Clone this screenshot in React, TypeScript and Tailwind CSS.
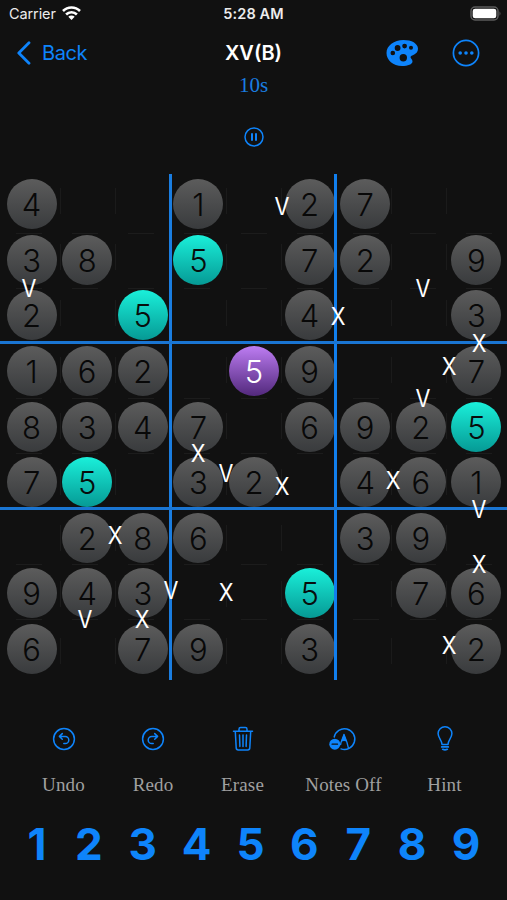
import type { ReactNode } from 'react';

const BLUE = '#0e84fb';

const ROWS = [
  '4..1.27..',
  '38.5.72.9',
  '2.5..4..3',
  '162.59..7',
  '8347.6925',
  '75.32.461',
  '.286..39.',
  '943..5.76',
  '6.79.3..2',
];

// Relation signs, by the centre of the sign on the board
const SIGNS: [string, number, number][] = [
  ['V', 281.5, 206.5], ['V', 29, 288.5], ['V', 422.5, 288.5], ['X', 337.5, 317],
  ['X', 479, 343.5], ['X', 448.5, 367], ['V', 422.5, 399], ['X', 197.5, 454],
  ['V', 226, 473.5], ['X', 281.5, 486.5], ['X', 393, 481], ['V', 479, 509.5],
  ['X', 115, 536], ['X', 479, 564.5], ['V', 170.5, 590.5], ['X', 226, 593],
  ['V', 85, 619.5], ['X', 141.5, 619.5], ['X', 448.5, 646],
];

const SEG_X = [59.5, 115, 226, 281, 391, 446];
const SEG_Y = [232.5, 287.5, 397.5, 453, 563.5, 619];
const NINE = [0, 1, 2, 3, 4, 5, 6, 7, 8];

const BOARD_TOP = 173;

function Cell({ value, selected }: { value: string; selected: boolean }) {
  if (value === '.') return <div />;
  const tone = selected
    ? 'bg-linear-to-b from-[#be7df3] to-[#53297d] text-white'
    : value === '5'
      ? 'bg-linear-to-b from-[#1af0da] to-[#069a95] text-[#080c0c]'
      : 'bg-linear-to-b from-[#5c5c5c] to-[#393b3d] text-[#080808]';
  return (
    <div className="flex items-center justify-center">
      <div className={`flex size-[50px] items-center justify-center rounded-full pt-px text-[31px] leading-none font-light ${tone}`}>
        {value}
      </div>
    </div>
  );
}

function Board() {
  return (
    <main className="relative h-[506px] w-full shrink-0">
      {SEG_X.map((x) => NINE.map((i) => (
        <span key={`${x}-${i}`} className="absolute h-[26px] w-px bg-[#1b1b1b]" style={{ left: x, top: 188 + 56.2 * i - BOARD_TOP }} />
      )))}
      {SEG_Y.map((y) => NINE.map((i) => (
        <span key={`${y}-${i}`} className="absolute h-px w-[26px] bg-[#1c1c1c]" style={{ left: 15.5 + 56.3 * i, top: y - BOARD_TOP }} />
      )))}
      <div className="flex pt-[3.4px] pl-[3.8px]">
        <div className="relative grid h-[500.4px] w-[500.4px] grid-cols-9 grid-rows-9">
          {ROWS.map((row, r) => row.split('').map((v, c) => (
            <Cell key={`${r}-${c}`} value={v} selected={r === 3 && c === 4} />
          )))}
        </div>
      </div>
      <span className="absolute top-[0.5px] left-[169px] h-[506px] w-[2.5px] bg-[#1a7de0]" />
      <span className="absolute top-[0.5px] left-[334px] h-[506px] w-[3px] bg-[#117fee]" />
      <span className="absolute top-[168px] left-0 h-[3px] w-full bg-[#1a75d2]" />
      <span className="absolute top-[334px] left-0 h-[3px] w-full bg-[#1a75d2]" />
      {SIGNS.map(([s, x, y]) => (
        <span key={`${x}-${y}`} className="absolute -translate-1/2 scale-x-90 text-2xl leading-none text-white" style={{ left: x, top: y - BOARD_TOP }}>
          {s}
        </span>
      ))}
    </main>
  );
}

function Icon({ children }: { children: ReactNode }) {
  return (
    <svg width="32" height="28" viewBox="0 0 32 28" fill="none" stroke={BLUE} strokeWidth="1.5" strokeLinecap="round" strokeLinejoin="round">
      {children}
    </svg>
  );
}

const undoArrow = (
  <>
    <circle cx="16" cy="14" r="10.4" />
    <path d="M14.3 8.6 11.4 11.4l2.9 2.8M11.6 11.4h5.6a3.6 3.6 0 0 1 0 7.2h-1.4" />
  </>
);

const TOOLS: { label: string; width: string; icon: ReactNode }[] = [
  { label: 'Undo', width: 'w-[90px]', icon: <Icon>{undoArrow}</Icon> },
  { label: 'Redo', width: 'w-[89px]', icon: <Icon><g transform="matrix(-1 0 0 1 32 0)">{undoArrow}</g></Icon> },
  {
    label: 'Erase', width: 'w-[90px]',
    icon: (
      <Icon>
        <path d="M6.5 6.3h19M12 6V4.2Q12 2.6 13.6 2.6h4.8Q20 2.6 20 4.2V6M8.3 6.5l.9 16.400q.1 2 2.1 2h9.400q2 0 2.100-2l.9-16.400M12.500 10l.4 11.400M16 10v11.400M19.500 10l-.4 11.400" />
      </Icon>
    ),
  },
  {
    label: 'Notes Off', width: 'w-[112px]',
    icon: (
      <Icon>
        <path d="M6.2 12A10.400 10.400 0 1 1 13 23.900" />
        <path d="M13 17.500 16 9.500l3 8 1.400 5.500M13 17.500l-.4 2" strokeWidth="1.300" />
        <path d="M16 8.500 13 16.800q3-1.600 6 0Z" fill={BLUE} stroke="none" />
        <circle cx="6.800" cy="19.200" r="5.500" fill={BLUE} stroke="none" />
        <path d="M4.100 19.200h5.400" stroke="#111" strokeWidth="1.300" />
      </Icon>
    ),
  },
  {
    label: 'Hint', width: 'w-[90px]',
    icon: (
      <Icon>
        <path d="M13 19.500c0-4.300-3.900-6.400-3.900-10.900a6.900 6.900 0 0 1 13.800 0c0 4.500-3.900 6.600-3.900 10.900Z" />
        <path d="M12.700 21.900h6.600M13.700 24.300q2.300 1 4.600 0" strokeWidth="1.700" />
      </Icon>
    ),
  },
];

export default function App() {
  return (
    <div className="flex h-[900px] w-[507px] flex-col overflow-hidden bg-[#111111] font-['Inter',sans-serif]">
      <div className="grid h-7 shrink-0 grid-cols-3 items-center px-[9px] text-[14.5px] leading-none text-[#ececec]">
        <div className="flex items-center gap-[6px]">
          <span className="tracking-[-0.1px]">Carrier</span>
          <svg className="-mt-[2px]" width="19" height="14" viewBox="0 0 19 14" fill="none" stroke="#fff" strokeWidth="2.6">
            <path d="M1 5a12 12 0 0 1 17 0M4.100 8.500a7.600 7.600 0 0 1 10.800 0" />
            <path d="M6.300 10.800a4.600 4.600 0 0 1 6.400 0L9.500 14Z" fill="#fff" stroke="none" />
          </svg>
        </div>
        <span className="text-center font-semibold tracking-[0.15px]">5:28 AM</span>
        <svg className="-mr-[4px] justify-self-end" width="32" height="16" viewBox="0 0 32 16">
          <rect x="1" y="1" width="27" height="13" rx="4" fill="none" stroke="#5b5b5b" strokeWidth="1.5" />
          <rect x="2.7" y="2.7" width="23.6" height="9.6" rx="2.4" fill="#fff" />
          <path d="M29.5 5.2q2 2.3 0 4.6Z" fill="#5b5b5b" />
        </svg>
      </div>

      <header className="grid h-12 shrink-0 grid-cols-3 items-center pt-px text-xl leading-none">
        <div className="flex items-center gap-[10px] pl-[16px] text-[#0e84fb]">
          <svg width="16" height="24" viewBox="0 0 16 24" fill="none" stroke={BLUE} strokeWidth="2.8" strokeLinecap="round" strokeLinejoin="round">
            <path d="M13 1.8 2.8 12 13 22.2" />
          </svg>
          <span className="tracking-[-0.4px]">Back</span>
        </div>
        <h1 className="text-center font-semibold text-white">XV(B)</h1>
        <div className="flex items-center justify-end gap-[34px] pr-[27px]">
          <svg width="32" height="28" viewBox="0 0 32 28">
            <path fill={BLUE} fillRule="evenodd" d="M17.5 1C8 1 .5 6.600.5 14c0 7.300 6.500 13 15.500 13 6 0 10.500-1.900 10.500-4.600 0-1.900-2-2.700-2-4.300 0-2 7.500-2 7.500-8.300C32 4.400 25.500 1 17.500 1ZM6.800 11.700a2.300 2.300 0 1 1 0 4.600 2.300 2.300 0 0 1 0-4.600ZM11.600 6.100a2.900 2.900 0 1 1 0 5.800 2.900 2.900 0 0 1 0-5.800ZM18.600 4.700a2.400 2.400 0 1 1 0 4.800 2.400 2.400 0 0 1 0-4.800ZM25 6.800a2 2 0 1 1 0 4 2 2 0 0 1 0-4ZM17.300 15a3.700 3.700 0 1 1 0 7.400 3.700 3.700 0 0 1 0-7.400Z" />
          </svg>
          <svg width="28" height="28" viewBox="0 0 28 28" fill={BLUE}>
            <circle cx="14" cy="14" r="12.600" fill="none" stroke={BLUE} strokeWidth="1.700" />
            <circle cx="8.200" cy="14" r="1.800" />
            <circle cx="14" cy="14" r="1.800" />
            <circle cx="19.800" cy="14" r="1.800" />
          </svg>
        </div>
      </header>

      <div className="flex h-[97px] shrink-0 flex-col items-center">
        <span className="font-['Liberation_Serif',serif] text-[21px] leading-[18px] text-[#1a7de0]">10s</span>
        <svg className="mt-[32px]" width="22" height="22" viewBox="0 0 22 22" fill="none" stroke={BLUE} strokeWidth="1.500">
          <circle cx="11" cy="11" r="9" />
          <path d="M9 8v6M13 8v6" strokeWidth="2" strokeLinecap="round" />
        </svg>
      </div>

      <Board />

      <div className="mt-[46px] flex shrink-0 pl-[18.5px]">
        {TOOLS.map((t) => (
          <div key={t.label} className={`flex flex-col items-center gap-[22px] ${t.width}`}>
            {t.icon}
            <span className="font-['Liberation_Serif',serif] text-[19px] leading-5 tracking-[0.15px] text-[#a0a0a0]">{t.label}</span>
          </div>
        ))}
      </div>

      <div className="mt-[27px] flex shrink-0 pl-[8px] text-[44px] leading-none font-bold text-[#0e84fb]">
        {NINE.map((n) => (
          <span key={n} className={n === 0 ? 'w-[53.9px] pl-[4px] text-center' : 'w-[53.9px] text-center'}>{n + 1}</span>
        ))}
      </div>
    </div>
  );
}
